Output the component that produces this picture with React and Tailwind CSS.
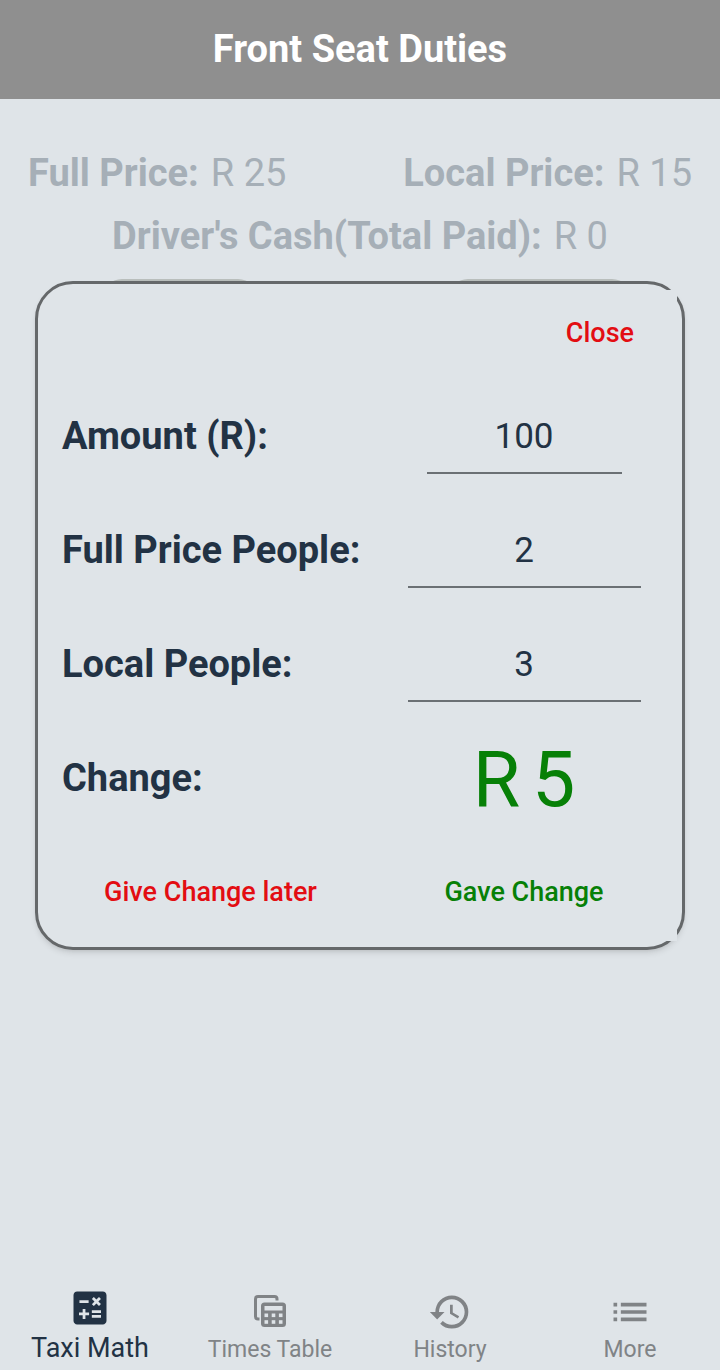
import React, { useState } from "react";
import clsx from "clsx";
import { MdCalculate, MdHistory, MdList } from "react-icons/md";

const FULL_PRICE = 25;
const LOCAL_PRICE = 15;

// Two stacked sheets, the front one with a header row and a 3x2 grid
function TimesTableIcon({ className }) {
    return (
        <svg viewBox="0 0 32 32" className={className} fill="none" stroke="currentColor" strokeLinejoin="round">
            <path d="M5.5 24 H4 Q1.5 24 1.5 21.5 V4 Q1.5 1.5 4 1.5 H20.5 Q23 1.5 23 4 V5.5" strokeWidth="3" />
            <rect x="7" y="7.5" width="25" height="24.5" rx="3.5" fill="currentColor" stroke="none" />
            <g className="fill-[#dfe4e8]" stroke="none">
                <rect x="10.5" y="11" width="18" height="4.5" />
                <rect x="10.5" y="18.5" width="3.6" height="3.6" />
                <rect x="17.7" y="18.5" width="3.6" height="3.6" />
                <rect x="24.9" y="18.5" width="3.6" height="3.6" />
                <rect x="10.5" y="25.2" width="3.6" height="3.6" />
                <rect x="17.7" y="25.2" width="3.6" height="3.6" />
                <rect x="24.9" y="25.2" width="3.6" height="3.6" />
            </g>
        </svg>
    );
}

const tabs = [
    { label: "Taxi Math", icon: MdCalculate, iconClass: "size-11" },
    { label: "Times Table", icon: TimesTableIcon, iconClass: "size-8 mt-1.5 mb-[7px]" },
    { label: "History", icon: MdHistory, iconClass: "size-11" },
    { label: "More", icon: MdList, iconClass: "size-11" },
];

function Price({ label, value }) {
    return (
        <p className="flex gap-3">
            <span className="font-bold">{label}</span>
            <span>R {value}</span>
        </p>
    );
}

function Field({ id, label, value, onChange, inputClass }) {
    return (
        <div className="flex h-[114px] items-center">
            <label htmlFor={id} className="flex-1 text-[38px] font-bold whitespace-nowrap">{label}</label>
            <div className="flex w-[306px] justify-center">
                <input
                    id={id}
                    type="text"
                    inputMode="numeric"
                    value={value}
                    onChange={(e) => onChange(e.target.value)}
                    className={clsx("h-[75px] border-b-2 border-[#6b7074] bg-transparent pt-0.5 text-center text-[35px] outline-none", inputClass)}
                />
            </div>
        </div>
    );
}

export default function App() {
    const [amount, setAmount] = useState("100");
    const [fullPeople, setFullPeople] = useState("2");
    const [localPeople, setLocalPeople] = useState("3");
    const [activeTab, setActiveTab] = useState("Taxi Math");

    const change = Number(amount) - Number(fullPeople) * FULL_PRICE - Number(localPeople) * LOCAL_PRICE;

    return (
        <div className="flex min-h-screen flex-col bg-[#dfe4e8] font-['Roboto',sans-serif] text-[#223244]">
            <header className="flex h-[99px] items-center justify-center bg-[#8f8f8f]">
                <h1 className="text-[38px] font-bold text-white">Front Seat Duties</h1>
            </header>

            <main className="flex-1 pt-[43px]">
                <section className="text-[38px] leading-[63px] text-[#a6afb7]">
                    <div className="flex justify-between px-7">
                        <Price label="Full Price:" value={FULL_PRICE} />
                        <Price label="Local Price:" value={LOCAL_PRICE} />
                    </div>
                    <div className="flex justify-center">
                        <Price label="Driver's Cash(Total Paid):" value={0} />
                    </div>
                </section>

                {/* Dimmed action buttons, covered by the dialog */}
                <div className="mt-[11px] grid grid-cols-2 justify-items-center">
                    <div className="h-10 w-[156px] rounded-[20px] bg-[#b9bebc]" />
                    <div className="h-10 w-[184px] rounded-[20px] bg-[#b9bebc]" />
                </div>

                <div
                    role="dialog"
                    aria-label="Change calculator"
                    className="relative mx-[35px] -mt-[38px] rounded-[38px] border-[3px] border-[#65686a] bg-[#dfe4e8] py-[6px] pr-[5px] pl-6 shadow-md"
                >
                    <div className="bg-[#dfe4e8] pb-2">
                        <div className="flex h-[89px] items-start justify-end pt-[23px] pr-[43px]">
                            <button type="button" className="text-[27px] leading-10 font-medium text-[#e30d12]">Close</button>
                        </div>

                        <Field id="amount" label="Amount (R):" value={amount} onChange={setAmount} inputClass="w-[195px]" />
                        <Field id="full" label="Full Price People:" value={fullPeople} onChange={setFullPeople} inputClass="w-[233px]" />
                        <Field id="local" label="Local People:" value={localPeople} onChange={setLocalPeople} inputClass="w-[233px]" />

                        <div className="flex h-[114px] items-center">
                            <span className="flex-1 text-[38px] font-bold">Change:</span>
                            <output className="flex w-[306px] justify-center gap-3 pt-1 text-[77px] leading-none text-[#078007]">
                                <span>R</span>
                                <span>{change}</span>
                            </output>
                        </div>

                        <div className="flex h-[98px] items-center pt-4 text-[27px] font-medium">
                            <div className="flex flex-1 justify-center pr-3">
                                <button type="button" className="text-[#e30d12]">Give Change later</button>
                            </div>
                            <div className="flex w-[306px] justify-center">
                                <button type="button" className="text-[#078007]">Gave Change</button>
                            </div>
                        </div>
                    </div>
                </div>
            </main>

            <nav className="grid grid-cols-4 pb-1">
                {tabs.map(({ label, icon: Icon, iconClass }) => {
                    const active = label === activeTab;
                    return (
                        <button
                            key={label}
                            type="button"
                            onClick={() => setActiveTab(label)}
                            className={clsx("flex flex-col items-center justify-end", active ? "text-[#223244]" : "text-[#808386]")}
                        >
                            <Icon className={iconClass} />
                            <span className={active ? "text-[27px] leading-9" : "text-[23px] leading-8"}>{label}</span>
                        </button>
                    );
                })}
            </nav>
        </div>
    );
}
